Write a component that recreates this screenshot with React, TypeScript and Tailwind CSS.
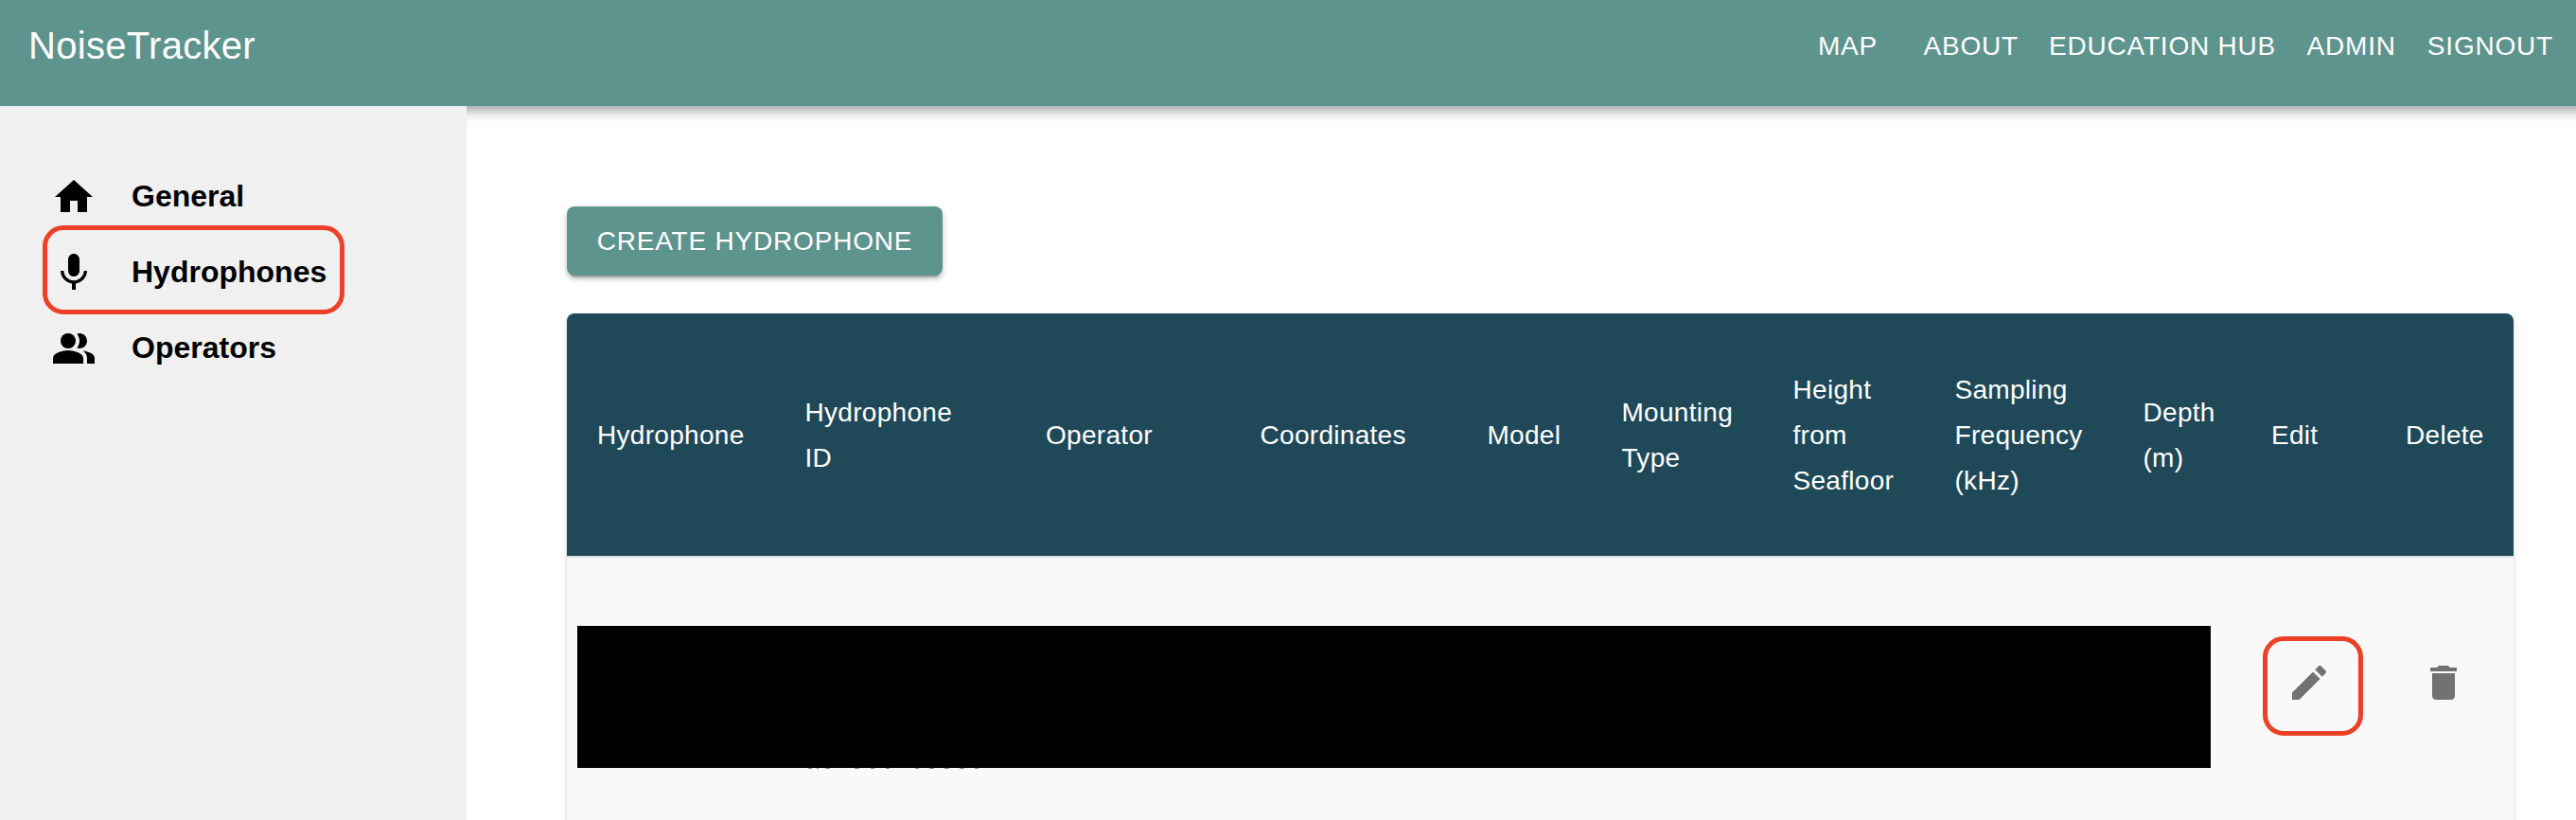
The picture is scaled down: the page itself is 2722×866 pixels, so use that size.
import React from "react";

const navItems = [
  { label: "MAP", cls: "w-[128px]" },
  { label: "ABOUT", cls: "px-4" },
  { label: "EDUCATION HUB", cls: "pl-4 pr-[16.5px]" },
  { label: "ADMIN", cls: "pl-4 pr-[17px]" },
  { label: "SIGNOUT", cls: "px-4" },
];

const columns = [
  ["Hydrophone"],
  ["Hydrophone", "ID"],
  ["Operator"],
  ["Coordinates"],
  ["Model"],
  ["Mounting", "Type"],
  ["Height", "from", "Seafloor"],
  ["Sampling", "Frequency", "(kHz)"],
  ["Depth", "(m)"],
  ["Edit"],
  ["Delete"],
];

const gridCols =
  "grid grid-cols-[219.5px_254.5px_226.5px_240px_142px_181px_171px_199px_135.5px_142px_146px]";

// Glyph bottoms that show just below the redaction bar: [offset, width]
const remnants = [
  [244, 4],
  [253, 2],
  [262, 5],
  [293, 5],
  [310, 4],
  [326, 4],
  [357, 4],
  [372, 5],
  [388, 5],
  [404, 5],
  [420, 4],
];

function Icon({ children }: { children: React.ReactNode }) {
  return (
    <svg viewBox="0 0 24 24" className="block size-12 shrink-0" fill="currentColor">
      {children}
    </svg>
  );
}

function SideItem({ icon, label }: { icon: React.ReactNode; label: string }) {
  return (
    <li className="flex h-20 items-center pl-[54px]">
      {icon}
      <span className="mb-0.5 ml-[37px] text-[32px] leading-[48px] font-bold">{label}</span>
    </li>
  );
}

export default function App() {
  return (
    <div className="flex h-[866px] w-[2722px] flex-col overflow-hidden bg-white font-['Liberation_Sans',Arial,sans-serif] text-black">
      <header className="relative -mr-5 flex h-[112px] shrink-0 items-start justify-between bg-[#5e948e] pr-[28px] pl-[30px] text-white shadow-[0_4px_8px_-2px_rgba(0,0,0,0.2),0_8px_10px_0_rgba(0,0,0,0.14),0_2px_20px_0_rgba(0,0,0,0.12)]">
        <h1 className="mt-4 text-[40px] leading-[64px] tracking-[0.3px]">NoiseTracker</h1>
        <nav className="mt-6 flex">
          {navItems.map((item) => (
            <a
              key={item.label}
              className={`block text-center text-[28px] leading-[49px] tracking-[0.8px] whitespace-nowrap ${item.cls}`}
            >
              {item.label}
            </a>
          ))}
        </nav>
      </header>

      <div className="flex min-h-0 flex-1">
        <aside className="relative w-[493px] shrink-0 bg-[#f0f0f0] pt-14">
          <ul>
            <SideItem
              label="General"
              icon={
                <Icon>
                  <path d="M10 20v-6h4v6h5v-8h3L12 3 2 12h3v8z" />
                </Icon>
              }
            />
            <SideItem
              label="Hydrophones"
              icon={
                <Icon>
                  <path d="M12 14c1.66 0 2.99-1.34 2.99-3L15 5c0-1.66-1.34-3-3-3S9 3.34 9 5v6c0 1.66 1.34 3 3 3m5.3-3c0 3-2.54 5.1-5.3 5.1S6.7 14 6.7 11H5c0 3.41 2.72 6.23 6 6.72V21h2v-3.28c3.28-.48 6-3.3 6-6.72z" />
                </Icon>
              }
            />
            <SideItem
              label="Operators"
              icon={
                <Icon>
                  <path d="M16.67 13.13C18.04 14.06 19 15.32 19 17v3h4v-3c0-2.18-3.57-3.47-6.33-3.87" />
                  <circle cx="9" cy="8" r="4" />
                  <path d="M15 12c2.21 0 4-1.79 4-4s-1.79-4-4-4c-.47 0-.91.1-1.33.24C14.5 5.27 15 6.58 15 8s-.5 2.73-1.33 3.76c.42.14.86.24 1.33.24M9 13c-2.67 0-8 1.34-8 4v3h16v-3c0-2.66-5.33-4-8-4" />
                </Icon>
              }
            />
          </ul>
          <div className="absolute top-[126px] left-[45px] h-[94px] w-[319px] rounded-[22px] border-5 border-[#ec4126]" />
        </aside>

        <main className="flex flex-1 flex-col items-start pt-[106px] pl-[106px]">
          <button className="h-[73px] w-[397px] shrink-0 rounded-lg bg-[#5e948e] text-[28px] leading-[49px] tracking-[0.8px] whitespace-nowrap text-white shadow-[0_6px_2px_-4px_rgba(0,0,0,0.2),0_4px_4px_0_rgba(0,0,0,0.14),0_2px_10px_0_rgba(0,0,0,0.12)]">
            CREATE HYDROPHONE
          </button>

          <section className="mt-10 h-[600px] w-[2057px] shrink-0 rounded-lg bg-[#f9f9f9] shadow-[0_4px_2px_-2px_rgba(0,0,0,0.2),0_2px_2px_0_rgba(0,0,0,0.14),0_2px_6px_0_rgba(0,0,0,0.12)]">
            <div
              className={`${gridCols} h-[258px] items-center rounded-t-lg border-b-2 border-[#e0e0e0] bg-[#1f4959] text-[28px] leading-[48px] tracking-[0.3px] text-white`}
            >
              {columns.map((lines, i) => (
                <div key={i} className="pt-0.5 pl-8 whitespace-nowrap">
                  {lines.map((line) => (
                    <div key={line}>{line}</div>
                  ))}
                </div>
              ))}
            </div>
            <div className={`${gridCols} h-[264px] items-center text-[#727272]`}>
              <div className="relative col-span-9 mt-[30px] ml-[11px] h-[150px] w-[1726px] bg-black">
                {remnants.map(([left, width]) => (
                  <span
                    key={left}
                    className="absolute top-full h-px bg-[#8c8c8c]"
                    style={{ left, width }}
                  />
                ))}
              </div>
              <div className="relative">
                <button className="ml-8 block p-4">
                  <Icon>
                    <path d="M3 17.25V21h3.75L17.81 9.94l-3.75-3.75zM20.71 7.04c.39-.39.39-1.02 0-1.41l-2.34-2.34a.9959.9959 0 0 0-1.41 0l-1.83 1.83 3.75 3.75z" />
                  </Icon>
                </button>
                <div className="absolute -top-[9px] left-[23px] h-[105px] w-[106px] rounded-[22px] border-5 border-[#ec4126]" />
              </div>
              <button className="ml-8 block w-20 p-4">
                <Icon>
                  <path d="M6 19c0 1.1.9 2 2 2h8c1.1 0 2-.9 2-2V7H6zM19 4h-3.5l-1-1h-5l-1 1H5v2h14z" />
                </Icon>
              </button>
            </div>
          </section>
        </main>
      </div>
    </div>
  );
}
